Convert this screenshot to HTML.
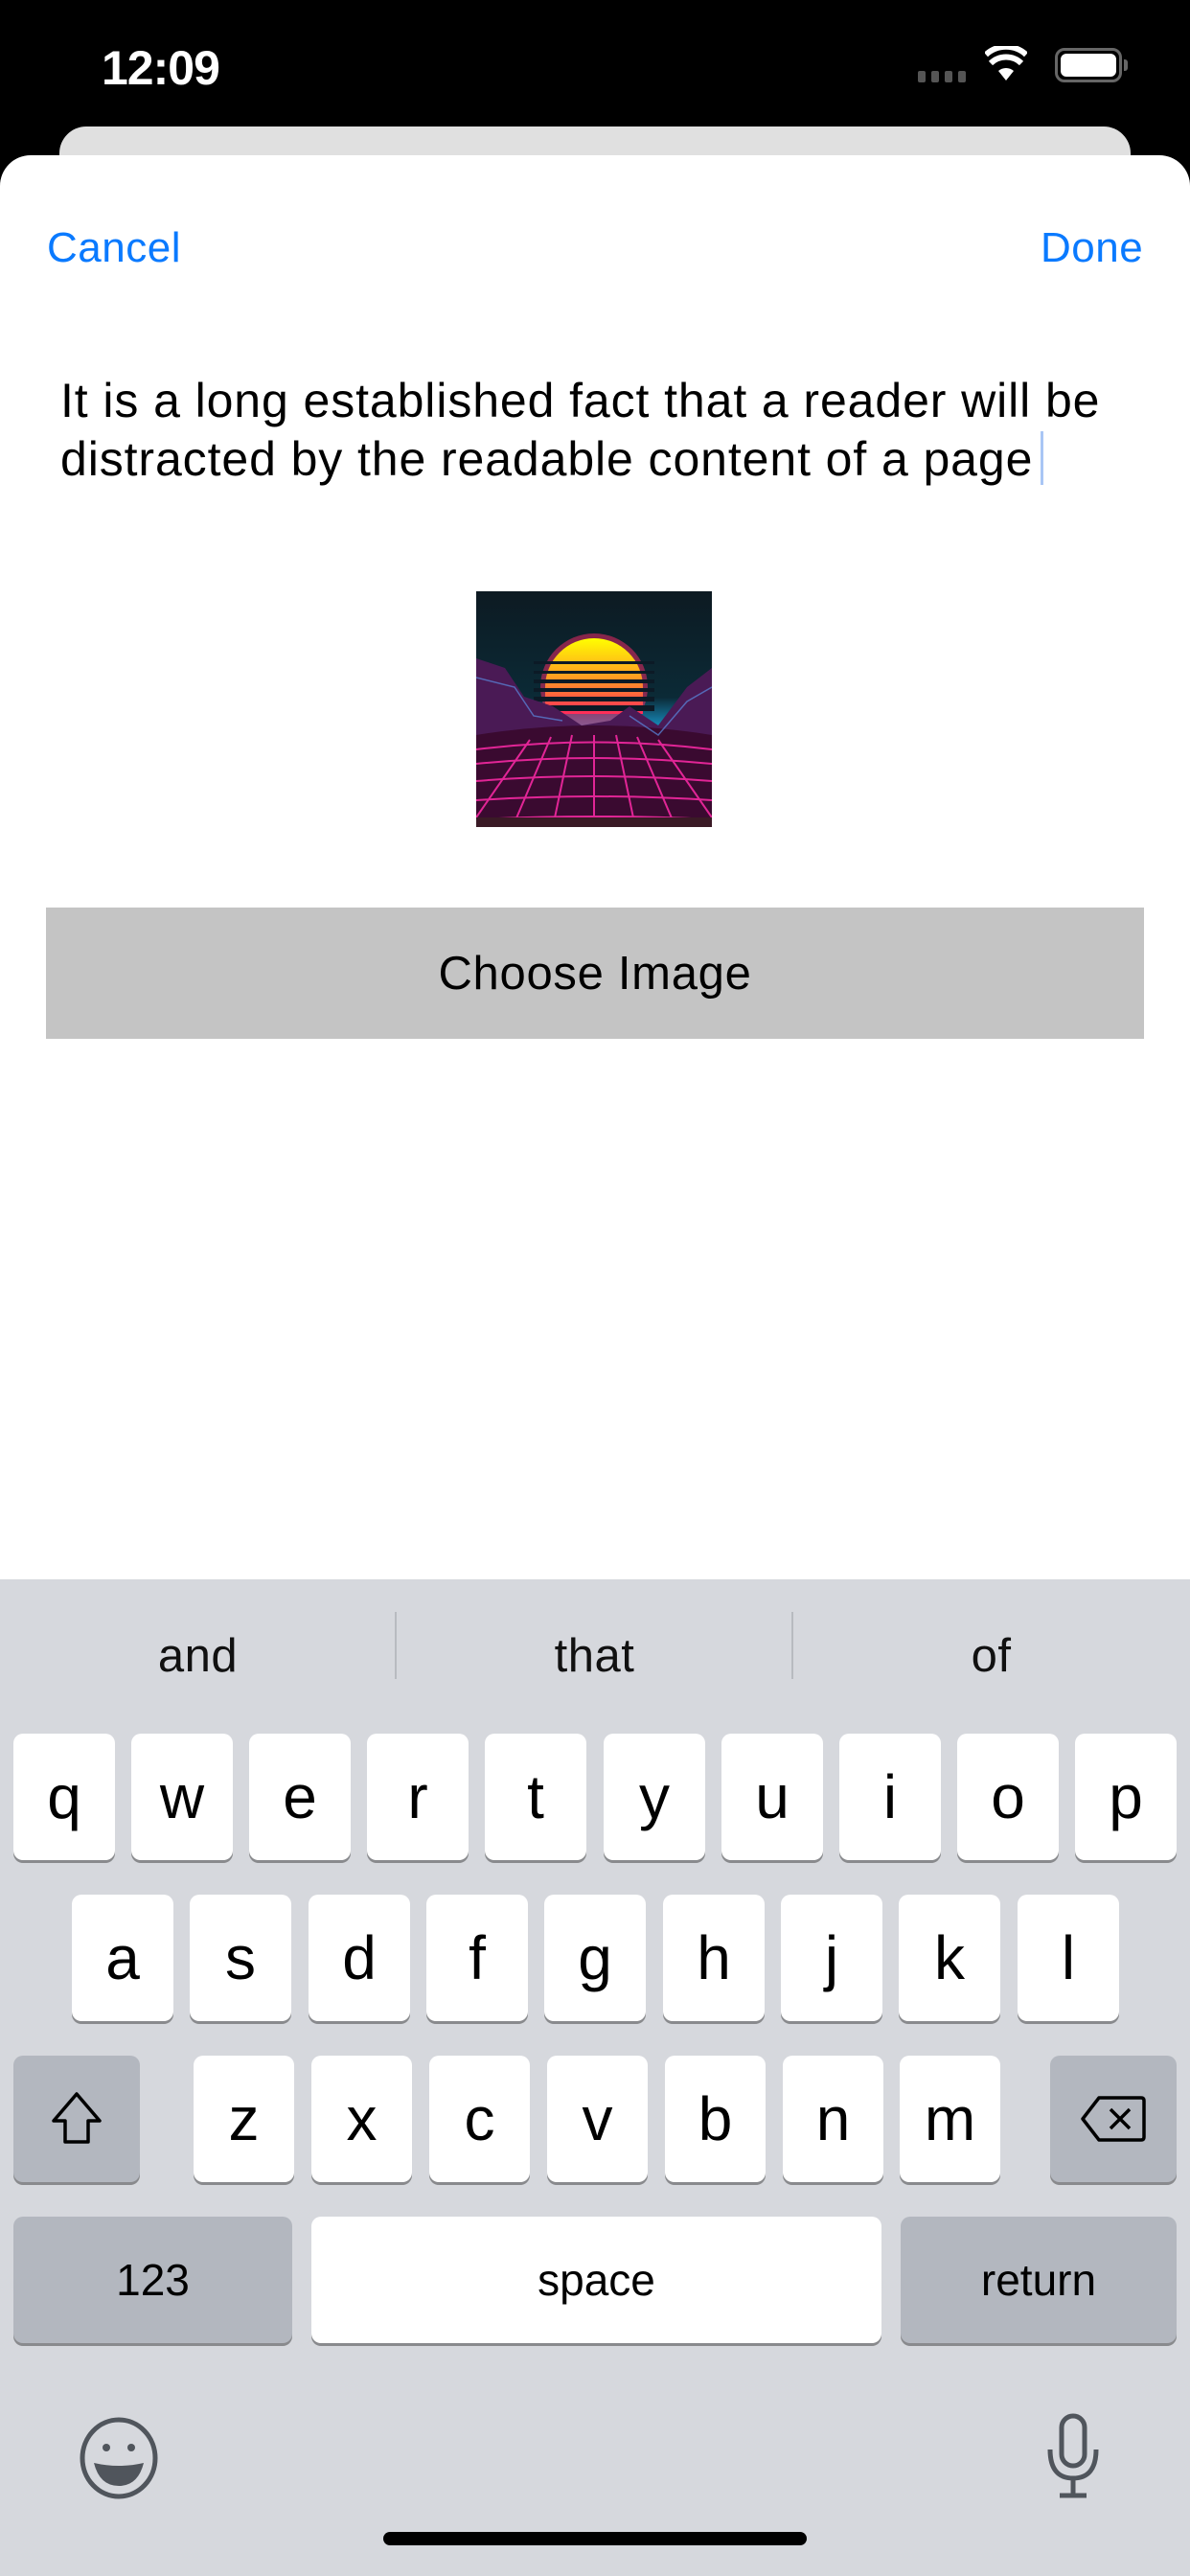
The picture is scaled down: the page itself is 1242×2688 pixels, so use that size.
<!DOCTYPE html>
<html><head><meta charset="utf-8"><style>
*{margin:0;padding:0;box-sizing:border-box}
body{width:1242px;height:2688px;background:#000;position:relative;overflow:hidden;font-family:"Liberation Sans",sans-serif}
.abs{position:absolute}
.key{position:absolute;background:#fff;border-radius:10px;box-shadow:0 3px 0 #898a8d;display:flex;align-items:center;justify-content:center;font-size:64px;color:#000;height:132px}
.dk{background:#b3b7bf}
.sug{position:absolute;top:1700px;font-size:49px;color:#111;width:413px;text-align:center;letter-spacing:0.5px}
</style></head><body>
<div class="abs" style="left:106px;top:42px;color:#fff;font-size:50px;font-weight:bold;letter-spacing:-1px">12:09</div>
<div class="abs" style="left:958px;top:74px;display:flex;gap:6px">
<div style="width:8px;height:12px;background:#555;border-radius:2px"></div><div style="width:8px;height:12px;background:#555;border-radius:2px"></div><div style="width:8px;height:12px;background:#555;border-radius:2px"></div><div style="width:8px;height:12px;background:#555;border-radius:2px"></div></div>
<svg class="abs" style="left:1028px;top:48px" width="44" height="38" viewBox="0 0 44 38"><path d="M22 36 L30 26 A12 12 0 0 0 14 26 Z" fill="#fff"/><path d="M6 18 A23 23 0 0 1 38 18" stroke="#fff" stroke-width="6" fill="none"/><path d="M1 9 A31 31 0 0 1 43 9" stroke="#fff" stroke-width="6" fill="none"/></svg>
<div class="abs" style="left:1101px;top:50px;width:70px;height:36px;border:3px solid #666;border-radius:10px;padding:3px"><div style="width:100%;height:100%;background:#fff;border-radius:6px"></div></div>
<div class="abs" style="left:1173px;top:62px;width:4px;height:12px;background:#666;border-radius:0 3px 3px 0"></div>
<div class="abs" style="left:62px;top:132px;width:1118px;height:80px;background:#e0e0e0;border-radius:28px 28px 0 0"></div>
<div class="abs" style="left:0;top:162px;width:1242px;height:1500px;background:#fff;border-radius:32px 32px 0 0"></div>
<div class="abs" style="left:49px;top:234px;font-size:44px;color:#0a7aff;letter-spacing:0.5px">Cancel</div>
<div class="abs" style="left:1086px;top:234px;font-size:44px;color:#0a7aff;letter-spacing:0.5px">Done</div>
<div class="abs" style="left:63px;top:388px;font-size:50px;line-height:61px;color:#000;width:1170px;letter-spacing:0.9px;white-space:nowrap">It is a long established fact that a reader will be<br>distracted by the readable content of a page<span style="display:inline-block;width:3px;height:56px;background:#a9c6f5;vertical-align:-10px;margin-left:8px"></span></div>
<svg class="abs" style="left:497px;top:617px" width="246" height="246" viewBox="0 0 246 246">
<defs><linearGradient id="bg" x1="0" y1="0" x2="0" y2="1"><stop offset="0" stop-color="#0d1a22"/><stop offset="0.45" stop-color="#0b2a36"/><stop offset="0.6" stop-color="#1aa0d8"/><stop offset="0.65" stop-color="#3a1a45"/><stop offset="1" stop-color="#3a0a2e"/></linearGradient>
<linearGradient id="sun" x1="0" y1="0" x2="0" y2="1"><stop offset="0" stop-color="#ffff00"/><stop offset="0.5" stop-color="#ffa020"/><stop offset="1" stop-color="#ff2a5a"/></linearGradient></defs>
<rect width="246" height="246" fill="url(#bg)"/>
<circle cx="123" cy="100" r="56" fill="#ff2a6a" opacity="0.5"/>
<path d="M72 100 A51 51 0 0 1 174 100 L174 128 L72 128Z" fill="url(#sun)"/>
<g fill="#0c1a26"><rect x="60" y="73" width="126" height="3"/><rect x="60" y="83" width="126" height="3"/><rect x="60" y="92" width="126" height="4"/><rect x="60" y="101" width="126" height="4"/><rect x="60" y="110" width="126" height="5"/><rect x="60" y="119" width="126" height="6"/></g>
<path d="M0 70 L30 80 L50 110 L80 120 L110 140 L140 135 L160 120 L190 140 L220 100 L246 80 L246 246 L0 246Z" fill="#4a1a55"/>
<path d="M0 150 Q123 130 246 150 L246 246 L0 246Z" fill="#3a0a30"/>
<g stroke="#ff2aa8" stroke-width="2" fill="none" opacity="0.85">
<path d="M0 165 Q123 150 246 165"/><path d="M0 180 Q123 168 246 180"/><path d="M0 198 Q123 188 246 198"/><path d="M0 218 Q123 210 246 218"/><path d="M0 238 Q123 232 246 238"/>
<path d="M123 150 L123 246"/><path d="M100 150 L80 246"/><path d="M146 150 L166 246"/><path d="M78 152 L38 246"/><path d="M168 152 L208 246"/><path d="M56 155 L0 236"/><path d="M190 155 L246 236"/></g>
<g stroke="#5a8ae0" stroke-width="1.5" fill="none" opacity="0.7"><path d="M0 90 L40 100 L60 130 L90 135"/><path d="M160 130 L190 150 L220 115 L246 100"/></g>
<rect y="236" width="246" height="10" fill="#3a1a26"/>
</svg>
<div class="abs" style="left:48px;top:947px;width:1146px;height:137px;background:#c4c4c4;display:flex;align-items:center;justify-content:center;font-size:49px;color:#000;letter-spacing:0.7px">Choose Image</div>
<div class="abs" style="left:0;top:1648px;width:1242px;height:1040px;background:#d6d8dd"></div>
<div class="sug" style="left:0">and</div><div class="sug" style="left:414px">that</div><div class="sug" style="left:828px">of</div>
<div class="abs" style="left:412px;top:1682px;width:2px;height:70px;background:#b8bbc0"></div>
<div class="abs" style="left:826px;top:1682px;width:2px;height:70px;background:#b8bbc0"></div>
<div class="key" style="left:14px;top:1809px;width:106px">q</div>
<div class="key" style="left:137px;top:1809px;width:106px">w</div>
<div class="key" style="left:260px;top:1809px;width:106px">e</div>
<div class="key" style="left:383px;top:1809px;width:106px">r</div>
<div class="key" style="left:506px;top:1809px;width:106px">t</div>
<div class="key" style="left:630px;top:1809px;width:106px">y</div>
<div class="key" style="left:753px;top:1809px;width:106px">u</div>
<div class="key" style="left:876px;top:1809px;width:106px">i</div>
<div class="key" style="left:999px;top:1809px;width:106px">o</div>
<div class="key" style="left:1122px;top:1809px;width:106px">p</div>
<div class="key" style="left:75px;top:1977px;width:106px">a</div>
<div class="key" style="left:198px;top:1977px;width:106px">s</div>
<div class="key" style="left:322px;top:1977px;width:106px">d</div>
<div class="key" style="left:445px;top:1977px;width:106px">f</div>
<div class="key" style="left:568px;top:1977px;width:106px">g</div>
<div class="key" style="left:692px;top:1977px;width:106px">h</div>
<div class="key" style="left:815px;top:1977px;width:106px">j</div>
<div class="key" style="left:938px;top:1977px;width:106px">k</div>
<div class="key" style="left:1062px;top:1977px;width:106px">l</div>
<div class="key dk" style="left:14px;top:2145px;width:132px"><svg width="56" height="60" viewBox="0 0 56 60"><path d="M28 4 L52 32 L40 32 L40 54 L16 54 L16 32 L4 32 Z" fill="none" stroke="#000" stroke-width="3.5" stroke-linejoin="round"/></svg></div>
<div class="key" style="left:202px;top:2145px;width:105px">z</div>
<div class="key" style="left:325px;top:2145px;width:105px">x</div>
<div class="key" style="left:448px;top:2145px;width:105px">c</div>
<div class="key" style="left:571px;top:2145px;width:105px">v</div>
<div class="key" style="left:694px;top:2145px;width:105px">b</div>
<div class="key" style="left:817px;top:2145px;width:105px">n</div>
<div class="key" style="left:939px;top:2145px;width:105px">m</div>
<div class="key dk" style="left:1096px;top:2145px;width:132px"><svg width="70" height="50" viewBox="0 0 70 50"><path d="M20 3 L64 3 Q67 3 67 6 L67 44 Q67 47 64 47 L20 47 L3 25 Z" fill="none" stroke="#000" stroke-width="3.5" stroke-linejoin="round"/><path d="M32 15 L52 35 M52 15 L32 35" stroke="#000" stroke-width="3.5"/></svg></div>
<div class="key dk" style="left:14px;top:2313px;width:291px;font-size:46px">123</div>
<div class="key" style="left:325px;top:2313px;width:595px;font-size:46px">space</div>
<div class="key dk" style="left:940px;top:2313px;width:288px;font-size:46px">return</div>
<svg class="abs" style="left:82px;top:2522px" width="84" height="86" viewBox="0 0 84 86"><ellipse cx="42" cy="43" rx="38" ry="40" fill="none" stroke="#50555c" stroke-width="5"/><circle cx="29" cy="32" r="4" fill="#50555c"/><circle cx="55" cy="32" r="4" fill="#50555c"/><path d="M16 48 Q42 54 68 48 Q62 72 42 72 Q22 72 16 48Z" fill="#50555c"/></svg>
<svg class="abs" style="left:1090px;top:2518px" width="60" height="90" viewBox="0 0 60 90"><rect x="18" y="3" width="24" height="52" rx="12" fill="none" stroke="#50555c" stroke-width="5"/><path d="M6 38 Q6 68 30 68 Q54 68 54 38" fill="none" stroke="#50555c" stroke-width="5"/><path d="M30 68 L30 84 M16 86 L44 86" stroke="#50555c" stroke-width="5"/></svg>
<div class="abs" style="left:400px;top:2642px;width:442px;height:14px;background:#000;border-radius:7px"></div>
</body></html>
